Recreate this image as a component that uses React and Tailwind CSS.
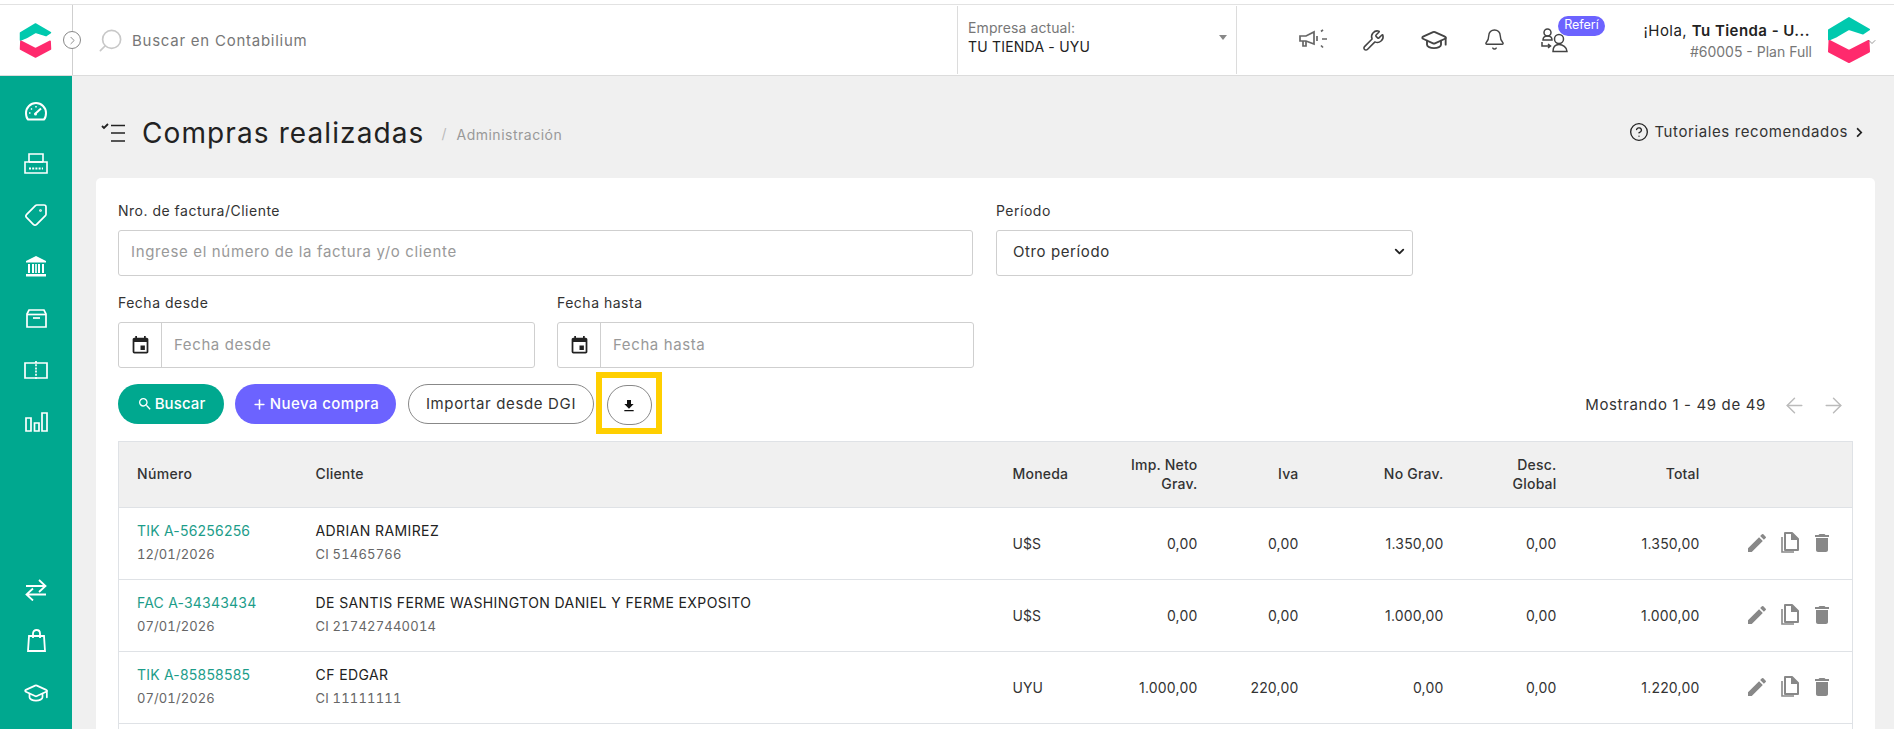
import React from 'react';
import { Tag, GraduationCap, Wrench, Bell, ChevronRight, ChevronDown, CircleHelp, ArrowLeft, ArrowRight, Search, Plus } from 'lucide-react';
import { MdEvent, MdFileDownload, MdSearch, MdEdit, MdDelete } from 'react-icons/md';
import { FaChevronRight } from 'react-icons/fa';

const Logo = ({ className }) => (
    <svg className={className} viewBox="0 0 44 46" fill="none" strokeLinejoin="round" strokeWidth="2">
        <path d="M22 1 L42 12.5 L36 16.5 L22 12 L10 19 L2 22.5 L2 13 Z" fill="#00C9AE" stroke="#00C9AE" />
        <path d="M2.5 24 L22 34 L41.5 24 L42 34.5 L22 45 L2 34.5 Z" fill="#FF2A6D" stroke="#FF2A6D" />
    </svg>
);

const GaugeIcon = () => (
    <svg width="22" height="19" viewBox="0 0 22 19" fill="none" stroke="white" strokeWidth="2">
        <path d="M3 17.5 C1.5 16 1 13.5 1 11 C1 5.5 5.5 1 11 1 C16.5 1 21 5.5 21 11 C21 13.5 20.5 16 19 17.5 Z" />
        <path d="M10 12 L16 6.5" strokeWidth="2" />
        <path d="M4 11h1.5M6 6.5l1 1M11 4v1.5" strokeWidth="1.5" />
        <circle cx="10.5" cy="12" r="1.5" fill="white" stroke="none" />
    </svg>
);

const PrinterIcon = () => (
    <svg width="24" height="21" viewBox="0 0 24 21" fill="none" stroke="white" strokeWidth="1.6">
        <path d="M5 9 V1 H19 V9" />
        <path d="M1 9 H23 V20 H1 Z" />
        <path d="M5 9 H19" />
        <path d="M5 15.5 H19" strokeDasharray="2 1.2" strokeWidth="2" />
    </svg>
);

const BankIcon = () => (
    <svg width="22" height="21" viewBox="0 0 22 21" fill="white">
        <path d="M11 0 L21 5 V6.5 H1 V5 Z" />
        <path d="M3 8 H5 V17 H3 Z M7 8 H9 V17 H7 Z M13 8 H15 V17 H13 Z M17 8 H19 V17 H17 Z M10.2 8 H11.8 V17 H10.2 Z" />
        <path d="M1 18 H21 V20.5 H1 Z" />
    </svg>
);

const BoxIcon = () => (
    <svg width="21" height="19" viewBox="0 0 21 19" fill="none" stroke="white" strokeWidth="1.7">
        <path d="M1 5 L3 1 H18 L20 5 V18 H1 Z" />
        <path d="M1 5.5 H20" />
        <path d="M7 9 H14" />
    </svg>
);

const BookIcon = () => (
    <svg width="24" height="19" viewBox="0 0 24 19" fill="none" stroke="white" strokeWidth="1.7">
        <path d="M12 2 H1 V17 H12 H23 V2 Z" />
        <path d="M12 0 V19" strokeDasharray="2 1.2" />
    </svg>
);

const BarsIcon = () => (
    <svg width="23" height="20" viewBox="0 0 23 20" fill="none" stroke="white" strokeWidth="1.7">
        <path d="M1 6 H6 V19 H1 Z M9.5 11 H14 V19 H9.5 Z M17 1 H22 V19 H17 Z" />
    </svg>
);

const SwapIcon = () => (
    <svg width="22" height="22" viewBox="0 0 22 22" fill="none" stroke="white" strokeWidth="1.8">
        <path d="M1 7 H20 M14 1 L20.5 7 L14 13" />
        <path d="M21 15.5 H2 M8 9.5 L1.5 15.5 L8 21.5" />
    </svg>
);

const BagIcon = () => (
    <svg width="19" height="23" viewBox="0 0 19 23" fill="none" stroke="white" strokeWidth="1.8">
        <path d="M2 7 H17 L18 22 H1 Z" />
        <path d="M6 9 V4.5 C6 2.5 7.5 1 9.5 1 C11.5 1 13 2.5 13 4.5 V9" />
    </svg>
);

const MegaphoneIcon = () => (
    <svg width="28" height="22" viewBox="0 0 28 22" fill="none" stroke="#666" strokeWidth="1.7">
        <path d="M1 7 H7 L15 3 V15 L7 12 H1 Z" />
        <path d="M4 12 V17 H7 V12" />
        <path d="M18 7 V12" />
        <path d="M22 2.5 L24 0.8 M23 10 H28 M22 16.5 L24 18.5" />
    </svg>
);

const ReferIcon = () => (
    <svg width="27" height="25" viewBox="0 0 27 25" fill="none" stroke="#444" strokeWidth="1.5">
        <circle cx="6.5" cy="4.5" r="3.5" />
        <path d="M2 12 C2 9.5 4 8 6.5 8 C9 8 11 9.5 11 12 Z" />
        <path d="M1 14 V18 H9 M7 16 L9.5 18 L7 20" />
        <circle cx="18" cy="11" r="4.5" />
        <path d="M12 23.5 C12 19 14.5 16.5 18 16.5 C21.5 16.5 26 19 26 23.5 Z" />
    </svg>
);

const CopyIcon = () => (
    <svg width="18" height="21" viewBox="0 0 18 21" fill="none" stroke="#888" strokeWidth="2">
        <path d="M4 1 H11 L17 7 V18 H4 Z" strokeLinejoin="round" />
        <path d="M11 1 V7 H17" fill="#888" />
        <path d="M1 5 V20 H13" strokeWidth="1.6" />
    </svg>
);

const ListIcon = () => (
    <svg width="25" height="20" viewBox="0 0 25 20" fill="none" stroke="#222" strokeWidth="1.6">
        <path d="M10 2.5 H24 M10 10 H24 M10 18 H24" />
        <path d="M1 3 L3 5 L7 1" strokeWidth="1.8" />
    </svg>
);

const rows = [
    { nro: 'TIK A-56256256', fecha: '12/01/2026', cliente: 'ADRIAN RAMIREZ', doc: 'CI 51465766', moneda: 'U$S', neto: '0,00', iva: '0,00', noGrav: '1.350,00', desc: '0,00', total: '1.350,00' },
    { nro: 'FAC A-34343434', fecha: '07/01/2026', cliente: 'DE SANTIS FERME WASHINGTON DANIEL Y FERME EXPOSITO', doc: 'CI 217427440014', moneda: 'U$S', neto: '0,00', iva: '0,00', noGrav: '1.000,00', desc: '0,00', total: '1.000,00' },
    { nro: 'TIK A-85858585', fecha: '07/01/2026', cliente: 'CF EDGAR', doc: 'CI 11111111', moneda: 'UYU', neto: '1.000,00', iva: '220,00', noGrav: '0,00', desc: '0,00', total: '1.220,00' },
];

const App = () => {
    return (
        <div className="h-[729px] w-full overflow-hidden bg-[#f0f0f0] font-['Inter',sans-serif] text-[#333]">
            {/* Header */}
            <div className="h-[5px] bg-white border-b border-[#e2e2e2]" />
            <header className="flex h-[71px] items-stretch bg-white border-b border-[#dcdcdc]">
                <div className="relative flex w-[73px] shrink-0 items-center pl-[19px] border-r border-[#cfcfcf]">
                    <Logo className="h-[35px] w-[33px]" />
                    <span className="absolute left-[63px] top-[26px] flex h-[18px] w-[18px] items-center justify-center rounded-full border border-[#888] bg-white">
                        <ChevronRight size={13} strokeWidth={1.2} color="#555" />
                    </span>
                </div>
                <div className="flex flex-1 items-center pl-[24px]">
                    <Search size={27} strokeWidth={1.5} color="#c8c8c8" className="-scale-x-100" />
                    <span className="ml-[8px] pt-[2px] text-[15px] tracking-[0.75px] text-[#777]">Buscar en Contabilium</span>
                </div>
                <div className="my-[1px] flex w-[280px] shrink-0 items-center justify-between border-x border-[#dcdcdc] pb-[6px] pl-[10px] pr-[9px]">
                    <div className="leading-[19px]">
                        <div className="text-[14px] tracking-[0.1px] text-[#777]">Empresa actual:</div>
                        <div className="text-[14px] tracking-[0.2px] text-[#222]">TU TIENDA - UYU</div>
                    </div>
                    <span className="h-0 w-0 border-x-[4px] border-t-[5px] border-x-transparent border-t-[#888]" />
                </div>
                <div className="flex w-[350px] shrink-0 items-center pl-[62px]">
                    <div className="flex w-[63px] justify-start"><MegaphoneIcon /></div>
                    <div className="flex w-[58px] justify-start"><Wrench size={23} strokeWidth={1.6} color="#444" /></div>
                    <div className="flex w-[60px] justify-start"><GraduationCap size={28} strokeWidth={1.6} color="#444" /></div>
                    <div className="flex w-[61px] justify-start pb-[2px] pl-[3px]"><Bell size={23} strokeWidth={1.5} color="#444" /></div>
                    <div className="relative">
                        <ReferIcon />
                        <span className="absolute left-[17px] top-[-12px] flex h-[20px] w-[47px] items-center justify-center rounded-full bg-[#6c63ff] text-[12.5px] text-white">Referí</span>
                    </div>
                </div>
                <div className="flex w-[307px] shrink-0 items-center justify-end pr-[23px]">
                    <div className="mr-[17px] text-right">
                        <div className="whitespace-nowrap text-[15px] leading-[20px] tracking-[0.45px] text-[#222]">¡Hola, <b className="font-semibold">Tu Tienda - U...</b></div>
                        <div className="-mr-[2px] mt-[3px] whitespace-nowrap text-[14px] leading-[16px] text-[#777]">#60005 - Plan Full</div>
                    </div>
                    <div className="relative">
                        <Logo className="h-[46px] w-[44px]" />
                        <ChevronDown size={12} strokeWidth={1} color="#333" className="absolute right-[-7px] top-[19px]" />
                    </div>
                </div>
            </header>

            <div className="flex h-[653px]">
                {/* Sidebar */}
                <aside className="flex w-[72px] shrink-0 flex-col items-center justify-between bg-[#00a88f] pt-[24px] pb-[23px]">
                    <div className="flex flex-col items-center">
                        <div className="flex h-[22px] items-center"><GaugeIcon /></div>
                        <div className="mt-[30px] flex h-[22px] items-center"><PrinterIcon /></div>
                        <div className="mt-[30px] flex h-[22px] items-center"><Tag size={24} strokeWidth={1.7} color="white" className="-scale-x-100" /></div>
                        <div className="mt-[29px] flex h-[22px] items-center"><BankIcon /></div>
                        <div className="mt-[30px] flex h-[22px] items-center"><BoxIcon /></div>
                        <div className="mt-[30px] flex h-[22px] items-center"><BookIcon /></div>
                        <div className="mt-[30px] flex h-[22px] items-center"><BarsIcon /></div>
                    </div>
                    <div className="flex flex-col items-center">
                        <SwapIcon />
                        <div className="mt-[28px]"><BagIcon /></div>
                        <GraduationCap size={26} strokeWidth={1.6} color="white" className="mt-[28px]" />
                    </div>
                </aside>

                {/* Content */}
                <main className="flex-1 px-[24px] pr-[19px]">
                    <div className="flex h-[102px] items-center justify-between pt-[12px]">
                        <div className="flex items-center">
                            <span className="ml-[5px]"><ListIcon /></span>
                            <h1 className="ml-[16px] text-[28px] font-normal tracking-[1.1px] text-[#222]">Compras realizadas</h1>
                            <span className="ml-[17px] text-[14px] text-[#bbb]">/</span>
                            <span className="ml-[10px] mt-[2px] text-[14px] tracking-[0.5px] text-[#999]">Administración</span>
                        </div>
                        <div className="mr-[10px] flex items-center pb-[2px] text-[15px] text-[#333]">
                            <CircleHelp size={20} strokeWidth={1.6} color="#222" />
                            <span className="ml-[5px] tracking-[0.6px]">Tutoriales recomendados</span>
                            <FaChevronRight size={11} color="#222" className="ml-[6px]" />
                        </div>
                    </div>

                    <section className="rounded-t-[5px] bg-white px-[22px] pt-[23px]">
                        <div className="flex gap-[23px]">
                            <div className="w-[855px]">
                                <label className="mb-[9px] block text-[14px] leading-[20px] tracking-[0.5px]">Nro. de factura/Cliente</label>
                                <input placeholder="Ingrese el número de la factura y/o cliente" className="h-[46px] w-full rounded-[3px] border border-[#cfcfcf] px-[12px] pb-[3px] text-[15px] tracking-[0.65px] placeholder:text-[#999]" />
                            </div>
                            <div className="w-[417px]">
                                <label className="mb-[9px] block text-[14px] leading-[20px] tracking-[0.5px]">Período</label>
                                <div className="relative">
                                    <select defaultValue="otro" className="h-[46px] w-full appearance-none rounded-[3px] border border-[#cfcfcf] bg-white px-[16px] pb-[2px] text-[15px] tracking-[0.6px] text-[#333]">
                                        <option value="otro">Otro período</option>
                                    </select>
                                    <ChevronDown size={15} strokeWidth={3} color="#222" className="pointer-events-none absolute right-[6px] top-[14px]" />
                                </div>
                            </div>
                        </div>

                        <div className="mt-[17px] flex gap-[22px]">
                            {['Fecha desde', 'Fecha hasta'].map((label) => (
                                <div key={label} className="w-[417px]">
                                    <label className="mb-[9px] block text-[14px] leading-[20px] tracking-[0.5px]">{label}</label>
                                    <div className="flex h-[46px] rounded-[3px] border border-[#cfcfcf]">
                                        <span className="flex w-[43px] shrink-0 items-center justify-center border-r border-[#cfcfcf]">
                                            <MdEvent size={21} color="#222" />
                                        </span>
                                        <input placeholder={label} className="min-w-0 flex-1 px-[12px] text-[15px] tracking-[0.6px] placeholder:text-[#999]" />
                                    </div>
                                </div>
                            ))}
                        </div>

                        <div className="mt-[4px] flex h-[62px] items-center justify-between">
                            <div className="flex items-center">
                                <button className="mt-[2px] flex h-[40px] w-[106px] items-center justify-center rounded-full bg-[#00a88f] text-[15px] font-medium tracking-[0.1px] text-white">
                                    <MdSearch size={16} className="mr-[2px]" />Buscar
                                </button>
                                <button className="ml-[11px] mt-[2px] flex h-[40px] w-[161px] items-center justify-center rounded-full bg-[#6c63ff] text-[15px] font-medium tracking-[0.4px] text-white">
                                    <Plus size={15} strokeWidth={2.5} className="mr-[3px]" />Nueva compra
                                </button>
                                <button className="ml-[12px] mt-[2px] h-[40px] w-[186px] rounded-full border border-[#888] bg-white text-[15px] tracking-[0.65px] text-[#333]">Importar desde DGI</button>
                                <div className="ml-[2px] flex h-[62px] w-[66px] items-center justify-center border-[6px] border-[#ffcf00] pt-[3px]">
                                    <button className="flex h-[40px] w-[45px] items-center justify-center rounded-full border border-[#888] bg-white">
                                        <MdFileDownload size={16} color="#111" className="mt-[2px]" />
                                    </button>
                                </div>
                            </div>
                            <div className="flex items-center pt-[4px]">
                                <span className="text-[15px] tracking-[0.65px] text-[#333]">Mostrando 1 - 49 de 49</span>
                                <ArrowLeft size={25} strokeWidth={1.4} color="#bbb" className="ml-[16px]" />
                                <ArrowRight size={25} strokeWidth={1.4} color="#bbb" className="ml-[14px] mr-[7px]" />
                            </div>
                        </div>

                        <table className="mt-[7px] w-[1734px] table-fixed border-collapse border border-[#dfe2e6] text-[14px]">
                            <colgroup>
                                <col className="w-[179px]" />
                                <col className="w-[697px]" />
                                <col className="w-[121px]" />
                                <col className="w-[100px]" />
                                <col className="w-[101px]" />
                                <col className="w-[145px]" />
                                <col className="w-[113px]" />
                                <col className="w-[143px]" />
                                <col className="w-[135px]" />
                            </colgroup>
                            <thead>
                                <tr className="h-[66px] bg-[#f0f0f0] leading-[19px] text-[#333]">
                                    <th className="px-[18px] pb-[2px] text-left font-medium tracking-[0.35px]">Número</th>
                                    <th className="px-[18px] pb-[2px] text-left font-medium tracking-[0.2px]">Cliente</th>
                                    <th className="px-[18px] pb-[2px] text-left font-medium tracking-[0.2px]">Moneda</th>
                                    <th className="pb-[2px] pr-[18px] text-right font-medium tracking-[0.2px]">Imp. Neto<br />Grav.</th>
                                    <th className="px-[18px] pb-[2px] text-right font-medium tracking-[0.2px]">Iva</th>
                                    <th className="px-[18px] pb-[2px] text-right font-medium tracking-[0.2px]">No Grav.</th>
                                    <th className="pb-[2px] pr-[18px] text-right font-medium tracking-[0.2px]">Desc.<br />Global</th>
                                    <th className="px-[18px] pb-[2px] text-right font-medium tracking-[0.2px]">Total</th>
                                    <th />
                                </tr>
                            </thead>
                            <tbody>
                                {rows.map((r) => (
                                    <tr key={r.nro} className="h-[72px] border-t border-[#dfe2e6] text-[#333]">
                                        <td className="px-[18px] pb-[2px] leading-[23px]">
                                            <div className="tracking-[0.2px] text-[#1d9d8a]">{r.nro}</div>
                                            <div className="mt-[1px] text-[13px] tracking-[0.1px] tabular-nums text-[#666]">{r.fecha}</div>
                                        </td>
                                        <td className="px-[18px] pb-[2px] leading-[23px]">
                                            <div className="tracking-[0.4px] text-[#222]">{r.cliente}</div>
                                            <div className="mt-[1px] text-[13px] tracking-[0.2px] tabular-nums text-[#666]">{r.doc}</div>
                                        </td>
                                        <td className="px-[18px]">{r.moneda}</td>
                                        <td className="pr-[18px] text-right tracking-[0.2px]">{r.neto}</td>
                                        <td className="px-[18px] text-right tracking-[0.2px]">{r.iva}</td>
                                        <td className="px-[18px] text-right tracking-[0.2px]">{r.noGrav}</td>
                                        <td className="px-[18px] text-right tracking-[0.2px]">{r.desc}</td>
                                        <td className="px-[18px] text-right tracking-[0.2px]">{r.total}</td>
                                        <td className="pl-[27px] pb-[2px]">
                                            <div className="flex items-center gap-[12px]">
                                                <MdEdit size={24} color="#888" />
                                                <CopyIcon />
                                                <MdDelete size={24} color="#888" className="-ml-[1px]" />
                                            </div>
                                        </td>
                                    </tr>
                                ))}
                                {/* next row is below the fold, only its top border shows */}
                                <tr className="h-[72px] border-t border-[#dfe2e6]"><td colSpan={9} /></tr>
                            </tbody>
                        </table>
                    </section>
                </main>
            </div>
        </div>
    );
};

export default App;
